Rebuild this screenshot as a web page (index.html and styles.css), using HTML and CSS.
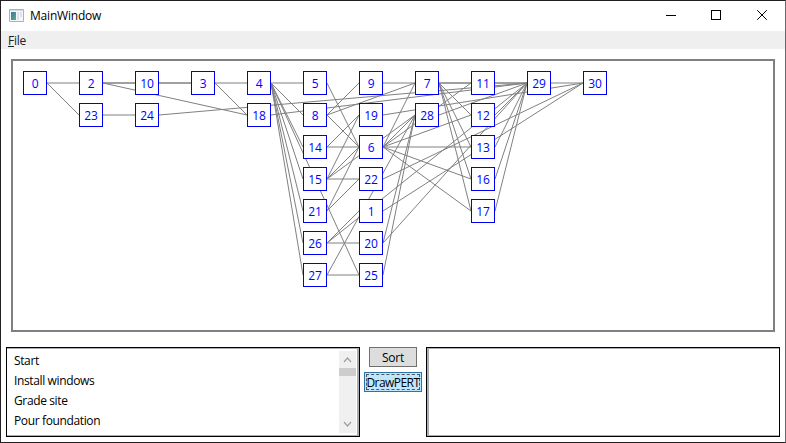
FILE: index.html
```
<!DOCTYPE html>
<html lang="en">
<head>
<meta charset="utf-8">
<title>MainWindow</title>
<link rel="stylesheet" href="styles.css">
</head>
<body>
<div class="window">
  <header class="titlebar">
    <svg class="app-icon" width="15" height="13" viewBox="0 0 15 13"><defs><linearGradient id="g" x1="0" y1="0" x2="1" y2="1"><stop offset="0" stop-color="#4274a5"/><stop offset="1" stop-color="#5bae83"/></linearGradient></defs><path fill="#f5f7f8" stroke="#abb1b5" d="M.5.5h14v12H.5z"/><path fill="#d5dadd" d="M1 1h13v1H1z"/><path fill="url(#g)" d="M2 3h5v8H2z"/><path fill="#dce2e8" d="M8 3h2v8H8zM11 3h2v5h-2z"/></svg>
    <span class="title">MainWindow</span>
    <svg class="controls" width="138" height="30" viewBox="0 0 138 30" fill="none" stroke="#000"><path d="M18 14.5h10M63.5 9.5h9v9h-9z" shape-rendering="crispEdges"/><path d="M109.2 9.2l9.6 9.6M118.8 9.2l-9.6 9.6"/></svg>
  </header>
  <nav class="menu"><span><u>F</u>ile</span></nav>
  <main class="content">
    <section class="canvas"><svg class="graph" id="graph" width="760" height="269" viewBox="13 61 760 269"></svg></section>
    <section class="bottom">
      <div class="list">
        <ul><li>Start</li><li>Install windows</li><li>Grade site</li><li>Pour foundation</li></ul>
        <div class="scroll">
          <svg width="17" height="17" viewBox="0 0 17 17"><path d="M5 11l3.5-4 3.5 4"/></svg>
          <div class="thumb"></div>
          <svg class="down" width="17" height="17" viewBox="0 0 17 17"><path d="M5 6l3.5 4L12 6"/></svg>
        </div>
      </div>
      <div class="actions"><button class="sort">Sort</button><button class="draw"><span>DrawPERT</span></button></div>
      <div class="list output"></div>
    </section>
  </main>
</div>
<script src="graph.js"></script>
</body>
</html>
```
FILE: styles.css
```
* { box-sizing: border-box; }
body { margin: 0; background: #fff; color: #000; font: 12px/16px "Open Sans", "Noto Sans", sans-serif; }
.window { width: 786px; height: 443px; border: 1px solid #231f20; border-right-color: #69696b; display: flex; flex-direction: column; overflow: hidden; background: #fff; }
.titlebar { height: 30px; display: flex; align-items: center; padding-left: 8px; flex: none; }
.app-icon { margin-right: 6px; margin-top: -2px; }
.title { font-size: 12px; letter-spacing: -.2px; }
.controls { margin-left: auto; margin-right: -1px; }
.menu { height: 18px; flex: none; background: #efefef; padding-left: 7px; line-height: 20px; color: #212121; letter-spacing: -.25px; }
.menu u { text-underline-offset: 1px; }
.content { flex: 1; display: flex; flex-direction: column; padding: 10px 5px 5px; }
.canvas { height: 273px; margin: 0 5px; border: 2px solid #808080; }
.graph { display: block; }
.edge { stroke: #808080; stroke-width: 1; }
.node { fill: #fff; stroke: #0000f0; stroke-width: 1; shape-rendering: crispEdges; }
.label { fill: #00f; font: 12px "Open Sans", sans-serif; text-anchor: middle; letter-spacing: -.2px; }
.bottom { display: flex; margin-top: 15px; height: 90px; }
.list { width: 354px; border: 1px solid #000; box-shadow: inset -1px 0 0 1px #abadb3; display: flex; justify-content: space-between; padding: 3px; }
.list.output { box-shadow: inset 1px 0 0 1px #abadb3; }
.list ul { margin: 0; padding: 0 0 0 4px; list-style: none; letter-spacing: -.37px; }
.list li { height: 20px; line-height: 20px; }
.scroll { width: 17px; background: #f0f0f0; display: flex; flex-direction: column; }
.scroll svg { display: block; fill: none; stroke: #a0a0a0; stroke-width: 1.3; }
.thumb { height: 8px; background: #cdcdcd; }
.down { margin-top: auto; }
.actions { width: 66px; display: flex; flex-direction: column; align-items: center; gap: 5px; }
button { font: inherit; padding: 0; height: 20px; border: 1px solid #707070; background: #ddd; line-height: 20px; }
.sort { width: 48px; letter-spacing: -.2px; }
.draw { width: 58px; background: #bee6fd; border-color: #2c73aa; padding: 1px; letter-spacing: -.55px; }
.draw span { display: flex; justify-content: center; height: 16px; line-height: 16px; border: 1px dashed #555; white-space: nowrap; }
```
FILE: graph.js
```
const columns = [[0], [2, 23], [10, 24], [3], [4, 18], [5, 8, 14, 15, 21, 26, 27],
  [9, 19, 6, 22, 1, 20, 25], [7, 28], [11, 12, 13, 16, 17], [29], [30]];
const edges = {
  0: [2, 23], 2: [10, 3, 18], 10: [3], 23: [24], 24: [29], 3: [4, 18], 18: [29],
  4: [5, 8, 14, 15, 21, 26, 27, 25], 5: [6], 8: [9, 7, 6], 14: [19, 6],
  15: [19, 6, 28, 22], 21: [6, 22], 26: [1, 29, 20], 27: [28, 25],
  9: [7], 19: [30], 6: [7, 28, 11, 12, 13, 16, 17], 22: [30], 1: [30], 20: [28, 29],
  25: [28], 7: [11, 12, 13, 16, 17, 29], 28: [29], 11: [29], 12: [29],
  13: [29], 16: [29], 17: [29], 29: [30]
};
const graph = document.getElementById("graph");
const position = {};
columns.forEach((column, c) => column.forEach((id, r) => {
  position[id] = { x: 23 + c * 56, y: 71 + r * 32 };
}));
function add(tag, attributes) {
  const el = document.createElementNS("http://www.w3.org/2000/svg", tag);
  for (const key in attributes) el.setAttribute(key, attributes[key]);
  graph.appendChild(el);
  return el;
}
for (const from in edges) {
  for (const to of edges[from]) {
    const a = position[from], b = position[to];
    add("line", { class: "edge", x1: a.x + 24, y1: a.y + 12, x2: b.x, y2: b.y + 12 });
  }
}
for (const id in position) {
  const p = position[id];
  add("rect", { class: "node", x: p.x + 0.5, y: p.y + 0.5, width: 23, height: 23 });
  add("text", { class: "label", x: p.x + 12, y: p.y + 17 }).textContent = id;
}
```
